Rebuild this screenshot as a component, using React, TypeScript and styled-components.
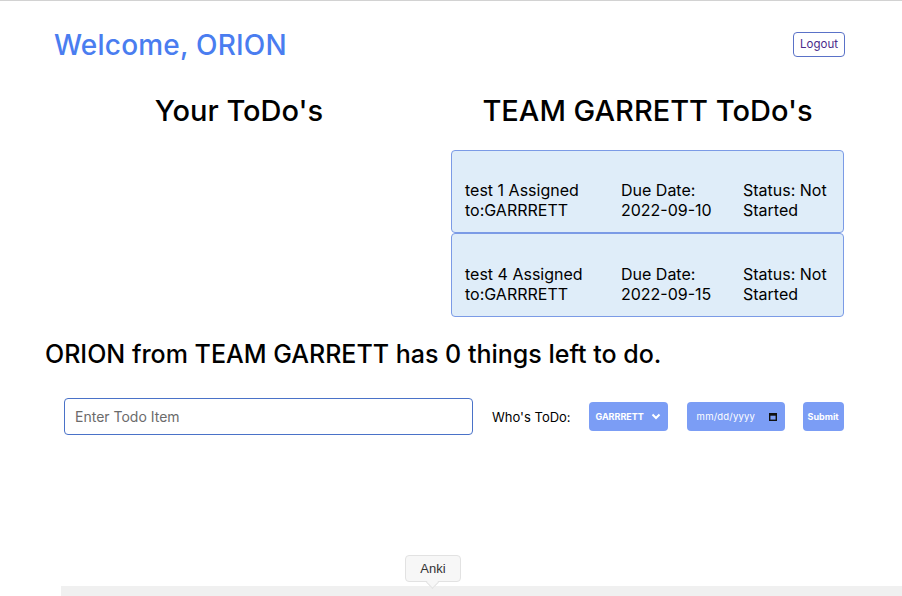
import React from "react";
import styled, { createGlobalStyle } from "styled-components";

const Global = createGlobalStyle`
  html, body { margin: 0; padding: 0; background: #ffffff; }
  body { font-family: "Inter", "DejaVu Sans", sans-serif; color: #000; }
  * { box-sizing: border-box; }
`;

const Page = styled.div`
  position: relative;
  width: 902px;
  height: 596px;
  overflow: hidden;
  border-top: 1px solid #d2d2d2;
  display: flex;
  flex-direction: column;
`;

const Header = styled.header`
  display: flex;
  justify-content: space-between;
  align-items: center;
  padding: 27px 57px 0 54px;
`;

const Welcome = styled.h1`
  margin: 0;
  font-family: "Inter", sans-serif;
  font-weight: 500;
  font-size: 28px;
  line-height: 34px;
  color: #4a7df0;
  letter-spacing: 0.2px;
`;

const LogoutButton = styled.button`
  height: 25px;
  padding: 0 6px;
  border: 1px solid #5a72c8;
  border-radius: 4px;
  background: #fff;
  color: #4b2b8a;
  font-family: "Inter", sans-serif;
  font-size: 11.5px;
  margin-top: -2px;
`;

const Columns = styled.div`
  display: grid;
  grid-template-columns: 410px 393px;
  column-gap: 7px;
  padding-left: 34px;
  margin-top: 31px;
`;

const Column = styled.section`
  display: flex;
  flex-direction: column;
  align-items: stretch;
`;

const ColumnTitle = styled.h2`
  margin: 0 0 21px;
  text-align: center;
  font-family: "Inter", sans-serif;
  font-weight: 500;
  font-size: 29px;
  line-height: 36px;
`;

const Card = styled.div`
  display: grid;
  grid-template-columns: 156px 122px 1fr;
  height: 83px;
  padding: 29px 8px 0 13px;
  background: #dfedf9;
  border: 1px solid #7b9be6;
  border-radius: 4px;
  font-family: "Inter", sans-serif;
  font-size: 16px;
  line-height: 20px;
  & + & { height: 84px; padding-top: 30px; }
`;

const Summary = styled.h3`
  margin: 22px 0 0 45px;
  font-family: "Inter", sans-serif;
  font-weight: 500;
  font-size: 25px;
  line-height: 30px;
`;

const Form = styled.form`
  display: flex;
  align-items: center;
  margin: 29px 0 0 64px;
`;

const TodoInput = styled.input`
  width: 409px;
  height: 37px;
  padding: 0 10px;
  border: 1px solid #4a72c8;
  border-radius: 4px;
  font-family: "Inter", sans-serif;
  font-size: 14px;
  &::placeholder { color: #6b6b6b; }
`;

const Label = styled.label`
  margin-left: 19px;
  font-family: "Inter", sans-serif;
  font-size: 13px;
  font-weight: 400;
`;

const BlueBox = styled.div<{ $w: number; $ml: number }>`
  width: ${(p) => p.$w}px;
  margin-left: ${(p) => p.$ml}px;
  height: 29px;
  border-radius: 4px;
  background: #7b9df5;
  color: #fff;
  display: flex;
  align-items: center;
  justify-content: center;
  gap: 7px;
  font-family: "Inter", sans-serif;
  font-size: 9px;
  font-weight: 700;
`;

const DateBox = styled(BlueBox)`
  justify-content: space-between;
  padding: 0 8px 0 10px;
`;

const DateText = styled.span`
  font-weight: 400;
  font-size: 9.5px;
  letter-spacing: 0.2px;
  color: #ffffff;
`;

const Tooltip = styled.div`
  position: absolute;
  left: 405px;
  top: 554px;
  width: 56px;
  height: 27px;
  background: #f7f7f7;
  border: 1px solid #e2e2e2;
  border-radius: 4px;
  display: flex;
  align-items: center;
  justify-content: center;
  font-family: "Liberation Sans", sans-serif;
  font-size: 13px;
  color: #333;
  z-index: 2;
  &::after {
    content: "";
    position: absolute;
    left: 22px;
    bottom: -6px;
    width: 8px;
    height: 8px;
    background: #f7f7f7;
    border-right: 1px solid #e2e2e2;
    border-bottom: 1px solid #e2e2e2;
    transform: rotate(45deg);
  }
`;

const BottomBar = styled.div`
  position: absolute;
  left: 61px;
  right: 0;
  bottom: 0;
  height: 10px;
  background: #f0f0f0;
`;

const todos = [
  { name: "test 1", due: "2022-09-10" },
  { name: "test 4", due: "2022-09-15" },
];

export default function App() {
  return (
    <>
      <Global />
      <Page>
        <Header>
          <Welcome>Welcome, ORION</Welcome>
          <LogoutButton>Logout</LogoutButton>
        </Header>
        <Columns>
          <Column>
            <ColumnTitle>Your ToDo's</ColumnTitle>
          </Column>
          <Column>
            <ColumnTitle>TEAM GARRETT ToDo's</ColumnTitle>
            {todos.map((t) => (
              <Card key={t.name}>
                <div>
                  {t.name} Assigned
                  <br />
                  to:GARRRETT
                </div>
                <div>
                  Due Date:
                  <br />
                  {t.due}
                </div>
                <div>
                  Status: Not
                  <br />
                  Started
                </div>
              </Card>
            ))}
          </Column>
        </Columns>
        <Summary>ORION from TEAM GARRETT has 0 things left to do.</Summary>
        <Form onSubmit={(e) => e.preventDefault()}>
          <TodoInput placeholder="Enter Todo Item" />
          <Label>Who's ToDo:</Label>
          <BlueBox $w={79} $ml={18}>
            GARRRETT
            <svg width="10" height="7" viewBox="0 0 10 7">
              <path d="M1.5 1.5 L5 5 L8.5 1.5" stroke="#fff" strokeWidth="2" fill="none" />
            </svg>
          </BlueBox>
          <DateBox $w={98} $ml={19}>
            <DateText>mm/dd/yyyy</DateText>
            <svg width="8" height="8" viewBox="0 0 8 8">
              <rect x="0.7" y="0.7" width="6.6" height="6.6" fill="none" stroke="#111" strokeWidth="1.4" />
              <rect x="0.7" y="0.7" width="6.6" height="2" fill="#111" />
            </svg>
          </DateBox>
          <BlueBox $w={41} $ml={18}>Submit</BlueBox>
        </Form>
        <Tooltip>Anki</Tooltip>
        <BottomBar />
      </Page>
    </>
  );
}
